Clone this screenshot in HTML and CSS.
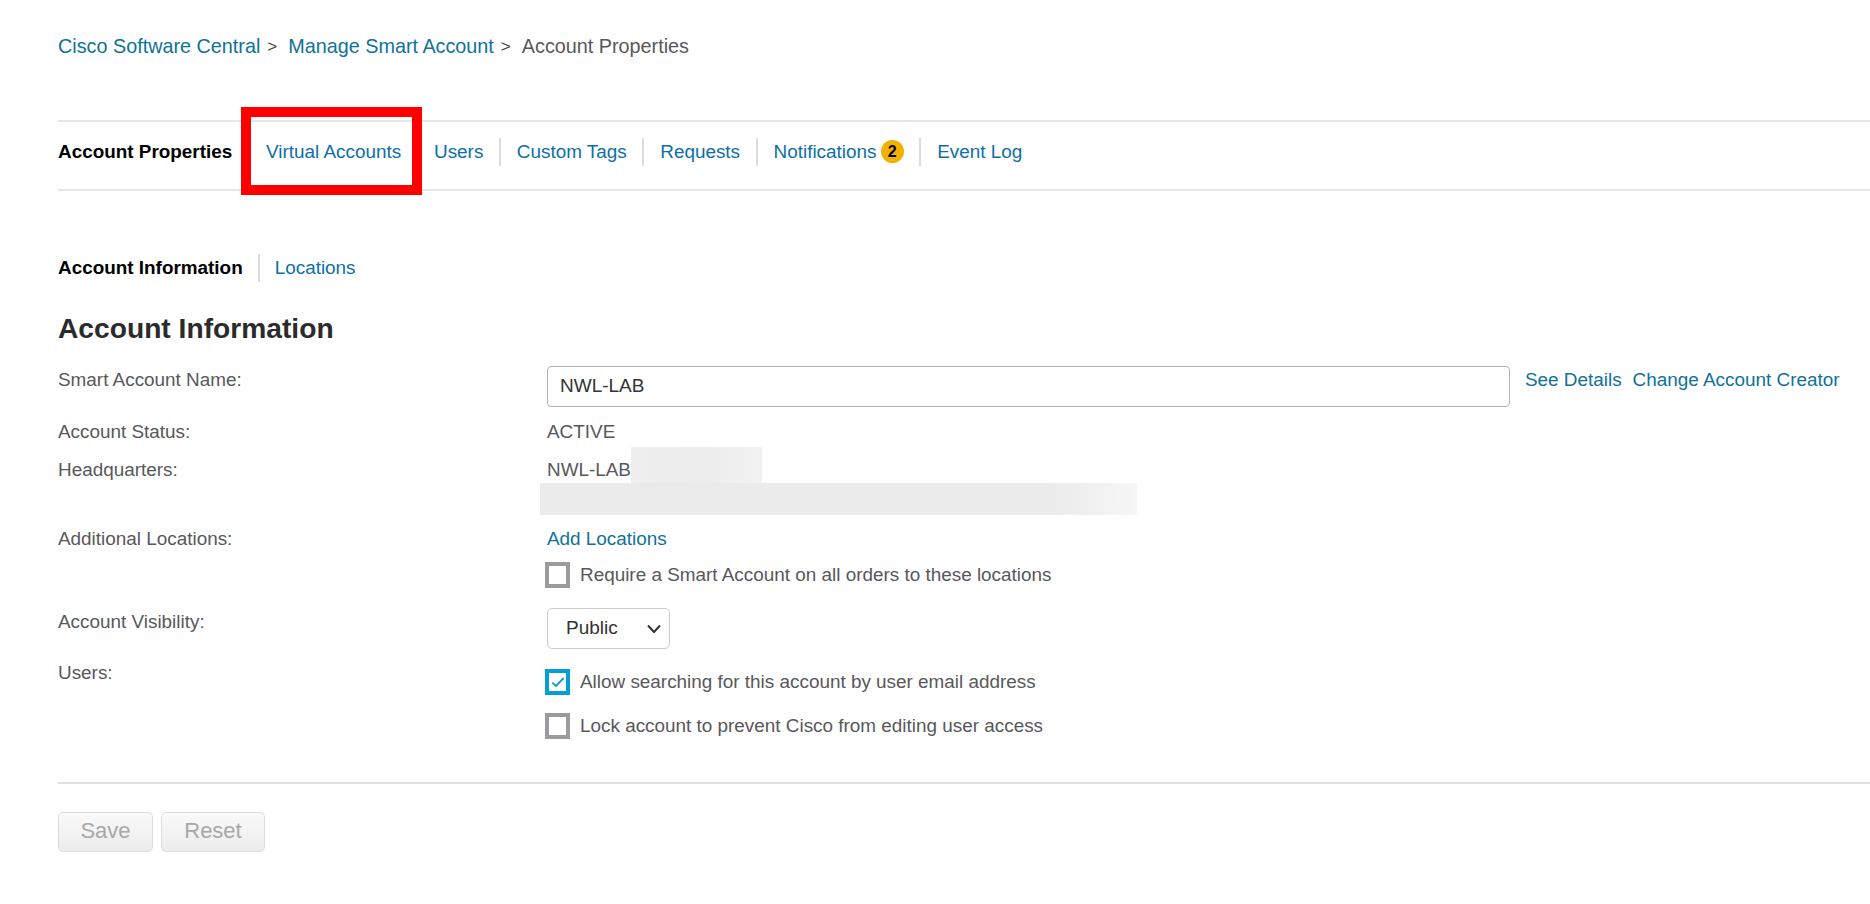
FILE: index.html
```html
<!DOCTYPE html>
<html lang="en">
<head>
<meta charset="utf-8">
<title>Account Properties</title>
<link rel="stylesheet" href="styles.css">
</head>
<body>
<main class="page">
  <nav class="crumbs">
    <a href="#">Cisco Software Central</a><span class="gt">&gt;</span>
    <a href="#">Manage Smart Account</a><span class="gt">&gt;</span>
    <span class="here">Account Properties</span>
  </nav>

  <nav class="tabs">
    <b class="tab-current">Account Properties</b>
    <a class="tab first" href="#">Virtual Accounts</a>
    <a class="tab" href="#">Users</a>
    <a class="tab" href="#">Custom Tags</a>
    <a class="tab" href="#">Requests</a>
    <a class="tab" href="#">Notifications <span class="badge">2</span></a>
    <a class="tab last" href="#">Event Log</a>
    <div class="highlight"></div>
  </nav>

  <nav class="subtabs">
    <b class="sub-current">Account Information</b>
    <a class="sub-link" href="#">Locations</a>
  </nav>

  <h1>Account Information</h1>

  <form class="form">
    <div class="row row-name">
      <label class="lbl">Smart Account Name:</label>
      <div class="val val-name">
        <input class="text" type="text" value="NWL-LAB">
        <a class="aside" href="#">See Details</a>
        <a class="aside" href="#">Change Account Creator</a>
      </div>
    </div>
    <div class="row row-status">
      <span class="lbl">Account Status:</span>
      <span class="val">ACTIVE</span>
    </div>
    <div class="row row-hq">
      <span class="lbl">Headquarters:</span>
      <div class="val hq">
        <div class="hq-line"><span class="hq-name">NWL-LAB</span><i class="blur blur-a"></i></div>
        <i class="blur blur-b"></i>
      </div>
    </div>
    <div class="row row-add">
      <span class="lbl">Additional Locations:</span>
      <div class="val"><a href="#">Add Locations</a></div>
    </div>
    <div class="row row-req">
      <span class="lbl"></span>
      <div class="val check"><span class="box"></span><span class="check-text">Require a Smart Account on all orders to these locations</span></div>
    </div>
    <div class="row row-vis">
      <label class="lbl">Account Visibility:</label>
      <div class="val">
        <div class="sel-wrap">
          <select class="sel"><option>Public</option></select>
          <svg class="chev" viewBox="0 0 14 10" width="14" height="10"><path d="M1 1.500l6 6.500 6-6.500" fill="none" stroke="#333" stroke-width="2"/></svg>
        </div>
      </div>
    </div>
    <div class="row row-allow">
      <span class="lbl">Users:</span>
      <div class="val check"><span class="box on"><svg viewBox="0 0 14 14" width="16" height="16"><path d="M2 7.500l3.200 3L12 3.500" fill="none" stroke="#049fd9" stroke-width="1.600"/></svg></span><span class="check-text">Allow searching for this account by user email address</span></div>
    </div>
    <div class="row row-lock">
      <span class="lbl"></span>
      <div class="val check"><span class="box"></span><span class="check-text">Lock account to prevent Cisco from editing user access</span></div>
    </div>
    <div class="actions">
      <button class="btn btn-save" type="button" disabled>Save</button>
      <button class="btn btn-reset" type="button" disabled>Reset</button>
    </div>
  </form>
</main>
</body>
</html>
```

FILE: styles.css
```css
* { box-sizing: border-box; }
html, body { margin: 0; height: 100%; background: #fff; overflow: hidden; }
body { font-family: "Liberation Sans", Arial, sans-serif; font-size: 18.9px; color: #58585b; }
a { color: #0d6fa6; text-decoration: none; }

.page { padding: 35px 0 0 58px; }

.crumbs { height: 23px; line-height: 23px; font-size: 19.8px; white-space: nowrap; display: flex; }
.crumbs a { color: #0f7298; }
.gt { margin: 0 11px 0 7px; color: #444; font-size: 17px; }
.here { color: #58585b; }

.tabs { position: relative; display: flex; align-items: center; height: 71px; margin-top: 62px; padding-bottom: 8px; border-top: 2px solid #e6e6e6; border-bottom: 2px solid #e6e6e6; white-space: nowrap; }
.tab-current { color: #000; width: 191px; }
.tab { display: block; height: 28px; line-height: 28px; padding: 0 15.5px 0 16px; border-left: 2px solid #dcdcdc; color: #0d6fa6; }
.tab.first { border-left: 0; width: 167px; padding-left: 17px; }
.badge { display: inline-block; width: 23px; height: 23px; line-height: 23px; margin-left: -1px; border-radius: 50%; background: #f2b100; color: #000; font-size: 16px; font-weight: 700; text-align: center; vertical-align: 1px; }
.highlight { position: absolute; left: 183px; top: -15px; width: 181px; height: 88px; border: 10px solid #ff0000; }

.subtabs { display: flex; align-items: center; height: 28px; margin-top: 63px; white-space: nowrap; }
.sub-current { color: #000; padding-right: 15px; }
.sub-link { height: 28px; line-height: 28px; padding-left: 15px; border-left: 2px solid #dcdcdc; }

h1 { margin: 29px 0 0; height: 34px; font-size: 28.2px; line-height: 34px; color: #2b2b2b; font-weight: 700; }

.form { margin-top: 21px; }
.row { display: grid; grid-template-columns: 489px 1fr; }
.lbl { line-height: 21px; }
.val { line-height: 21px; }

.row-name { height: 54px; }
.row-name .lbl { padding-top: 3px; }
.val-name { display: flex; align-items: flex-start; }
.text { width: 963px; height: 41px; padding: 0 12px 2px; border: 1px solid #b3b3b3; border-radius: 4px; font: 19px "Liberation Sans", Arial, sans-serif; color: #333; background: #fff; }
.aside { color: #0f7298; margin: 3px 0 0 15px; white-space: nowrap; }
.aside + .aside { margin-left: 11px; }

.row-status { height: 27px; padding-top: 1px; }
.row-hq { height: 81px; }
.row-hq .lbl { padding-top: 12px; }
.hq-line { display: flex; height: 36px; align-items: flex-end; }
.hq-name { flex: none; width: 84px; margin-bottom: 3px; white-space: nowrap; }
.blur { display: block; background: #eeeeee; }
.blur-a { width: 131px; height: 36px; background: linear-gradient(90deg, #eee, #ededed 60%, #f2f2f2); }
.blur-b { width: 597px; height: 32px; margin-left: -7px; background: linear-gradient(90deg, #ebebeb, #ebebeb 85%, #f6f6f6); }

.row-add { height: 34px; }
.row-add a { color: #0f7298; }
.check { display: flex; align-items: center; align-self: start; margin-left: -2px; white-space: nowrap; }
.check-text { margin-top: -2px; }
.box { display: flex; align-items: center; justify-content: center; flex: none; width: 25px; height: 26px; margin-right: 10px; border: 4px solid #9b9b9f; background: #fff; }
.box.on { border-color: #049fd9; }

.row-req { height: 46px; }
.row-vis { height: 54px; }
.row-vis .lbl { padding-top: 3px; }
.sel-wrap { position: relative; width: 123px; }
.sel { display: block; appearance: none; width: 123px; height: 41px; padding: 0 0 2px 18px; border: 1px solid #ccc; border-radius: 5px; background: #fff; font: 19px "Liberation Sans", Arial, sans-serif; color: #333; }
.chev { position: absolute; right: 9px; top: 16px; pointer-events: none; }

.row-allow { height: 51px; }
.row-allow .check { margin-top: 7px; }
.row-lock { height: 71px; border-bottom: 2px solid #e0e0e0; }

.actions { display: flex; gap: 8px; padding-top: 28px; }
.btn { height: 40px; padding: 0 0 2px; border: 1px solid #dcdcdc; border-radius: 5px; background: linear-gradient(#fafafa, #ececec); color: #a8a8a8; font: 22px "Liberation Sans", Arial, sans-serif; }
.btn-save { width: 95px; }
.btn-reset { width: 104px; }
```
